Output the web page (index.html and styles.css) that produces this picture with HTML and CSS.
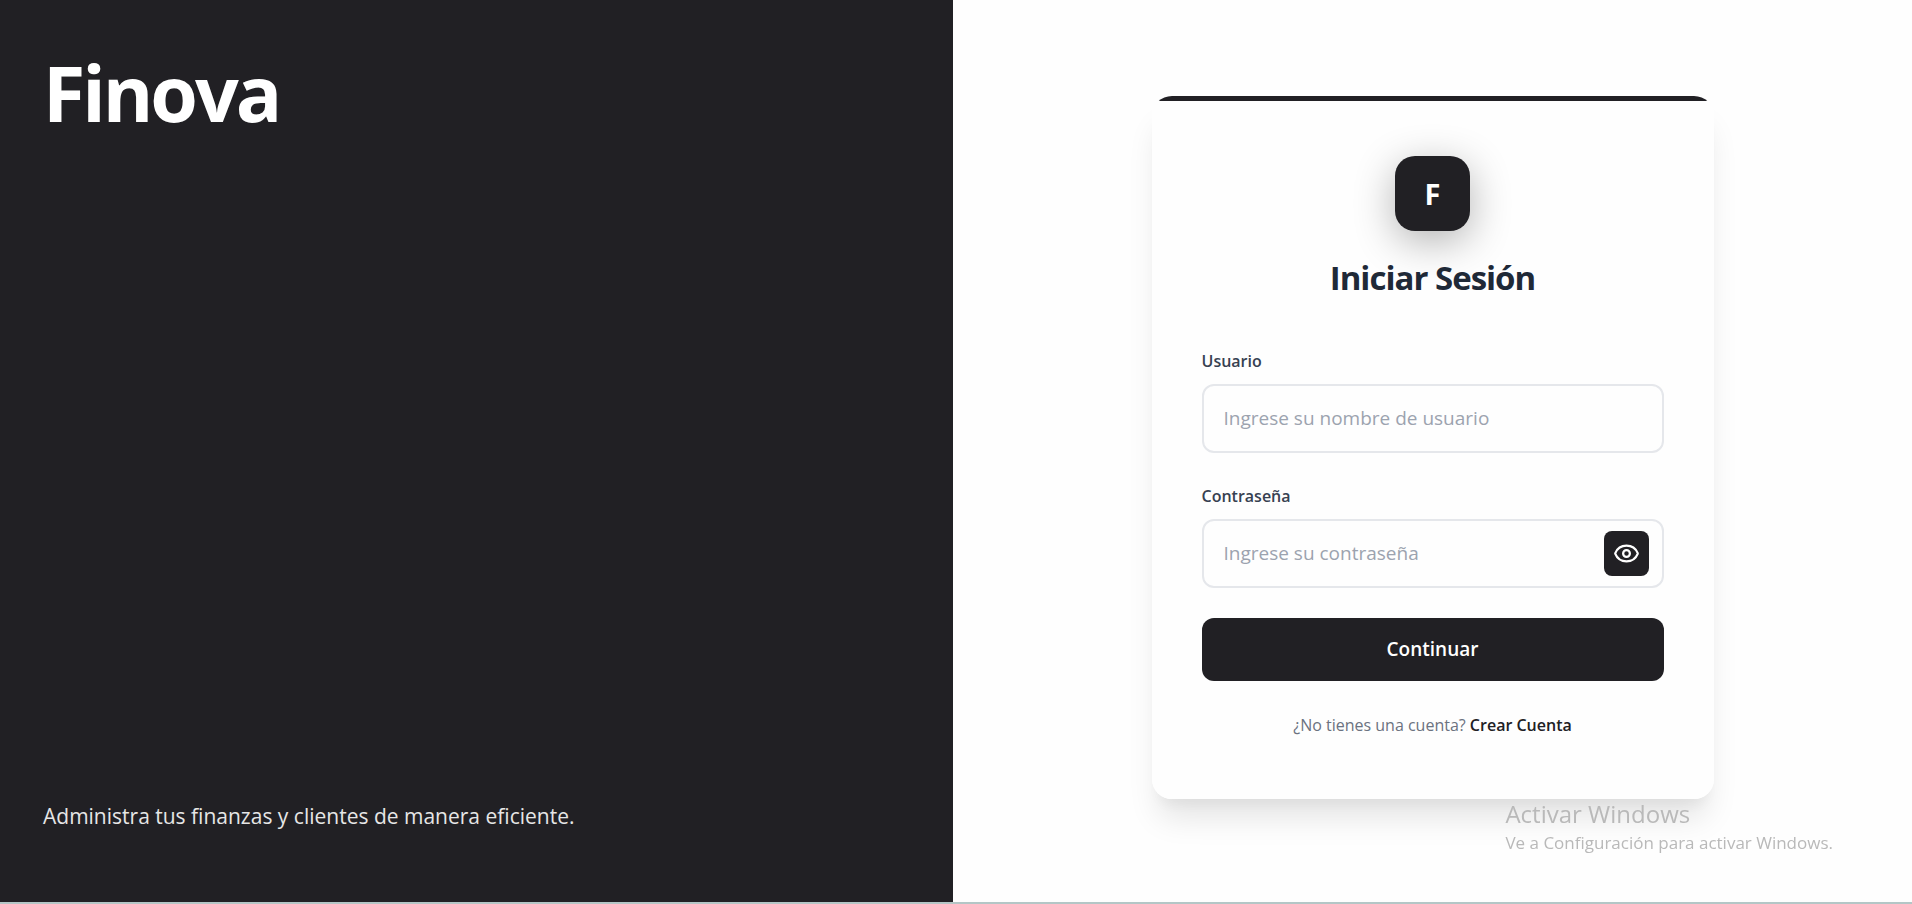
FILE: index.html
```html
<!DOCTYPE html>
<html lang="es">
<head>
  <meta charset="UTF-8">
  <meta name="viewport" content="width=device-width, initial-scale=1.0">
  <title>Finova - Iniciar Sesión</title>
  <link rel="stylesheet" href="styles.css">
</head>
<body>

  <div class="login-page">
    <section class="brand-panel">
      <h1 class="brand-name">Finova</h1>
      <p class="brand-text">Administra tus finanzas y clientes de manera eficiente.</p>
    </section>

    <main class="form-panel">
      <div class="login-card">
        <div class="logo">F</div>
        <h2 class="login-title">Iniciar Sesión</h2>

        <form class="login-form" id="loginForm">
          <div class="form-group">
            <label for="usuario">Usuario</label>
            <input type="text" id="usuario" placeholder="Ingrese su nombre de usuario" required>
          </div>
          <div class="form-group">
            <label for="password">Contraseña</label>
            <div class="password-box">
              <input type="password" id="password" placeholder="Ingrese su contraseña" required>
              <button type="button" class="toggle-password" aria-label="Mostrar contraseña" onclick="togglePassword()">
                <svg viewBox="0 0 24 24" fill="none" stroke="currentColor" stroke-width="2" stroke-linecap="round" stroke-linejoin="round">
                  <path d="M2.062 12.348a1 1 0 0 1 0-.696 10.75 10.75 0 0 1 19.876 0 1 1 0 0 1 0 .696 10.75 10.75 0 0 1-19.876 0"/>
                  <circle cx="12" cy="12" r="3"/>
                </svg>
              </button>
            </div>
          </div>
          <button type="submit" class="submit-button">Continuar</button>
        </form>

        <p class="register-text">¿No tienes una cuenta? <a href="#">Crear Cuenta</a></p>
      </div>
    </main>
  </div>

  <div class="system-notice">
    <p class="notice-title">Activar Windows</p>
    <p class="notice-text">Ve a Configuración para activar Windows.</p>
  </div>

  <script>
    // Show or hide the password
    function togglePassword() {
      const input = document.getElementById("password");
      input.type = input.type === "password" ? "text" : "password";
    }
  </script>

</body>
</html>
```
FILE: styles.css
```css
* {
  box-sizing: border-box;
}
body {
  font-family: 'Segoe UI', 'Open Sans', 'Noto Sans', sans-serif;
  background-color: #fefefe;
  margin: 0;
}
h1, h2, p {
  margin: 0;
}
input, button {
  font-family: inherit;
}
.login-page {
  display: grid;
  grid-template-columns: 953fr 959fr;
  min-height: 100vh;
  border-bottom: 2px solid #b4c6c6;
}
.brand-panel {
  display: flex;
  flex-direction: column;
  justify-content: space-between;
  padding: 40px 43px 70px;
  background-color: #212024;
  color: white;
}
.brand-name {
  font-size: 77px;
  font-weight: 700;
  line-height: 106px;
  letter-spacing: -3px;
}
.brand-text {
  font-size: 21px;
  line-height: 32px;
  color: #e6e6e6;
}
.form-panel {
  display: flex;
  align-items: center;
  justify-content: center;
  padding: 20px 20px 28px;
}
.login-card {
  width: 100%;
  max-width: 562px;
  padding: 60px 50px;
  border-radius: 20px;
  background: linear-gradient(#212024 5px, #fefefe 5px);
  box-shadow: 0 25px 31px -6px rgba(0, 0, 0, 0.1), 0 12px 12px -6px rgba(0, 0, 0, 0.04);
}
.logo {
  display: flex;
  align-items: center;
  justify-content: center;
  width: 75px;
  height: 75px;
  margin: 0 auto 25px;
  border-radius: 20px;
  background-color: #212024;
  color: white;
  font-size: 29px;
  font-weight: 700;
  box-shadow: 0 10px 40px rgba(0, 0, 0, 0.3);
}
.login-title {
  margin-bottom: 48px;
  text-align: center;
  font-size: 33px;
  font-weight: 700;
  line-height: 44px;
  letter-spacing: -1px;
  color: #1f2937;
}
.form-group {
  margin-bottom: 30px;
}
.form-group label {
  display: block;
  margin-bottom: 10px;
  font-size: 16px;
  font-weight: 600;
  line-height: 26px;
  color: #374151;
}
.form-group input {
  display: block;
  width: 100%;
  height: 69px;
  padding: 0 20px;
  border: 2px solid #e5e7eb;
  border-radius: 12px;
  background-color: #fefefe;
  font-size: 19px;
  color: #1f2937;
}
.form-group input::placeholder {
  color: #9ca3af;
}
.password-box {
  position: relative;
}
.password-box input {
  padding-right: 70px;
}
.toggle-password {
  position: absolute;
  top: 12px;
  right: 15px;
  display: flex;
  align-items: center;
  justify-content: center;
  width: 45px;
  height: 45px;
  padding: 0;
  border: none;
  border-radius: 8px;
  background-color: #212024;
  color: white;
  cursor: pointer;
}
.toggle-password svg {
  width: 27px;
  height: 27px;
}
.submit-button {
  display: block;
  width: 100%;
  height: 63px;
  border: none;
  border-radius: 12px;
  background-color: #212024;
  color: white;
  font-size: 19px;
  font-weight: 600;
  cursor: pointer;
}
.register-text {
  margin-top: 30px;
  text-align: center;
  font-size: 16px;
  line-height: 28px;
  color: #6b7280;
}
.register-text a {
  color: #212024;
  font-weight: 600;
  text-decoration: none;
}
.system-notice {
  position: fixed;
  right: 79px;
  bottom: 48px;
  color: #b9b9b9;
  pointer-events: none;
}
.notice-title {
  font-size: 24px;
  line-height: 32px;
}
.notice-text {
  font-size: 17px;
  line-height: 26px;
}
```
